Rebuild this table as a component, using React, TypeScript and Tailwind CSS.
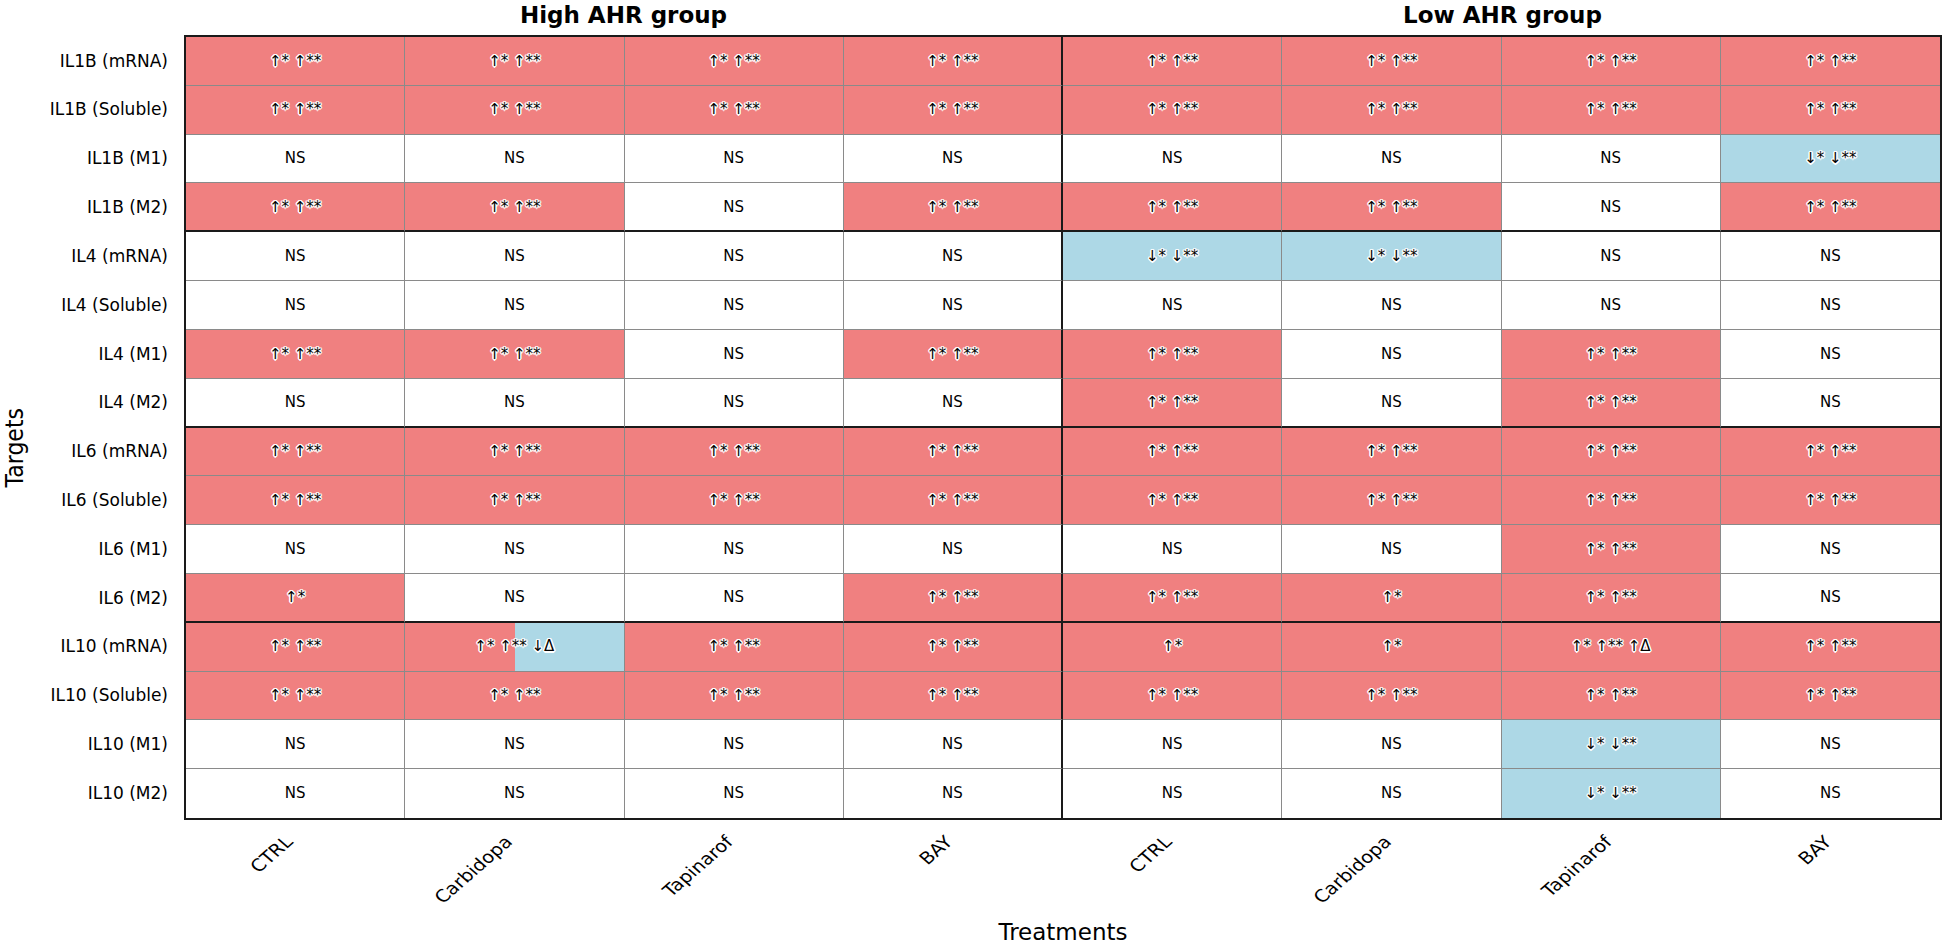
import React from 'react';

type Tone = 'up' | 'down' | 'ns' | 'split';

interface ICell {
  text: string;
  tone: Tone;
}

const TREATMENTS = ['CTRL', 'Carbidopa', 'Tapinarof', 'BAY'];

const CODES: Record<string, ICell> = {
  U: { text: '↑* ↑**', tone: 'up' },
  D: { text: '↓* ↓**', tone: 'down' },
  N: { text: 'NS', tone: 'ns' },
  A: { text: '↑*', tone: 'up' },
  S: { text: '↑* ↑** ↓Δ', tone: 'split' },
  T: { text: '↑* ↑** ↑Δ', tone: 'up' },
};

// one code per column: High CTRL..BAY, then Low CTRL..BAY
const ROWS: [string, string][] = [
  ['IL1B (mRNA)', 'UUUUUUUU'],
  ['IL1B (Soluble)', 'UUUUUUUU'],
  ['IL1B (M1)', 'NNNNNNND'],
  ['IL1B (M2)', 'UUNUUUNU'],
  ['IL4 (mRNA)', 'NNNNDDNN'],
  ['IL4 (Soluble)', 'NNNNNNNN'],
  ['IL4 (M1)', 'UUNUUNUN'],
  ['IL4 (M2)', 'NNNNUNUN'],
  ['IL6 (mRNA)', 'UUUUUUUU'],
  ['IL6 (Soluble)', 'UUUUUUUU'],
  ['IL6 (M1)', 'NNNNNNUN'],
  ['IL6 (M2)', 'ANNUUAUN'],
  ['IL10 (mRNA)', 'USUUAATU'],
  ['IL10 (Soluble)', 'UUUUUUUU'],
  ['IL10 (M1)', 'NNNNNNDN'],
  ['IL10 (M2)', 'NNNNNNDN'],
];

const TONE_BG: Record<Tone, string> = {
  up: 'bg-[#f08080]',
  down: 'bg-[#add8e6]',
  ns: 'bg-white',
  split: 'bg-[linear-gradient(to_right,#f08080_50%,#add8e6_50%)]',
};

const HALO =
  '[text-shadow:-1px_-1px_0_#fff,1px_-1px_0_#fff,-1px_1px_0_#fff,1px_1px_0_#fff,0_-1.5px_0_#fff,0_1.5px_0_#fff,-1.5px_0_0_#fff,1.5px_0_0_#fff]';

function cellBorders(row: number, col: number): string {
  const bottom =
    row === ROWS.length - 1 ? '' : row % 4 === 3 ? 'border-b-2 border-b-[#1a1a1a]' : 'border-b border-b-[#8a8a8a]';
  const right = col === 7 ? '' : col === 3 ? 'border-r-2 border-r-[#1a1a1a]' : 'border-r border-r-[#8a8a8a]';
  return `${bottom} ${right}`;
}

const HeatCell: React.FC<{ cell: ICell; row: number; col: number }> = ({ cell, row, col }) => (
  <div
    className={`flex items-center justify-center text-[15px] text-black ${TONE_BG[cell.tone]} ${cellBorders(row, col)}`}
  >
    <span className={cell.tone === 'ns' ? '' : HALO}>{cell.text}</span>
  </div>
);

export default function App() {
  return (
    <div className="w-[1949px] h-[951px] bg-white text-black font-['DejaVu_Sans',sans-serif] overflow-hidden">
      <div className="ml-[184px] w-[1758px] h-[35px] grid grid-cols-2 pt-[4px]">
        <div className="text-center text-[23px] font-bold leading-none">High AHR group</div>
        <div className="text-center text-[23px] font-bold leading-none">Low AHR group</div>
      </div>

      <div className="flex">
        <div className="w-[30px] h-[785px] flex items-center justify-center pt-[40px]">
          <span className="text-[22px] leading-none [writing-mode:vertical-rl] rotate-180 scale-x-115">Targets</span>
        </div>
        <div className="w-[154px] h-[785px] grid grid-rows-16 py-[2px] pr-[16px]">
          {ROWS.map(([label]) => (
            <div key={label} className="flex items-center justify-end text-[17px] whitespace-nowrap">
              {label}
            </div>
          ))}
        </div>
        <div className="w-[1758px] h-[785px] grid grid-cols-8 grid-rows-16 border-2 border-[#1a1a1a]">
          {ROWS.map(([label, codes], row) =>
            codes.split('').map((code, col) => (
              <HeatCell key={`${label}-${col}`} cell={CODES[code]} row={row} col={col} />
            )),
          )}
        </div>
      </div>

      <div className="ml-[184px] w-[1758px] h-[101px] grid grid-cols-8">
        {[...TREATMENTS, ...TREATMENTS].map((name, i) => (
          <div key={`${name}-${i}`} className="relative">
            <span className="absolute right-[calc(50%+11px)] top-[13px] origin-top-right [transform:scaleX(1.15)_rotate(-45deg)] whitespace-nowrap text-[17px] leading-none">
              {name}
            </span>
          </div>
        ))}
      </div>

      <div className="ml-[184px] w-[1758px] text-center text-[23px] leading-none">Treatments</div>
    </div>
  );
}
